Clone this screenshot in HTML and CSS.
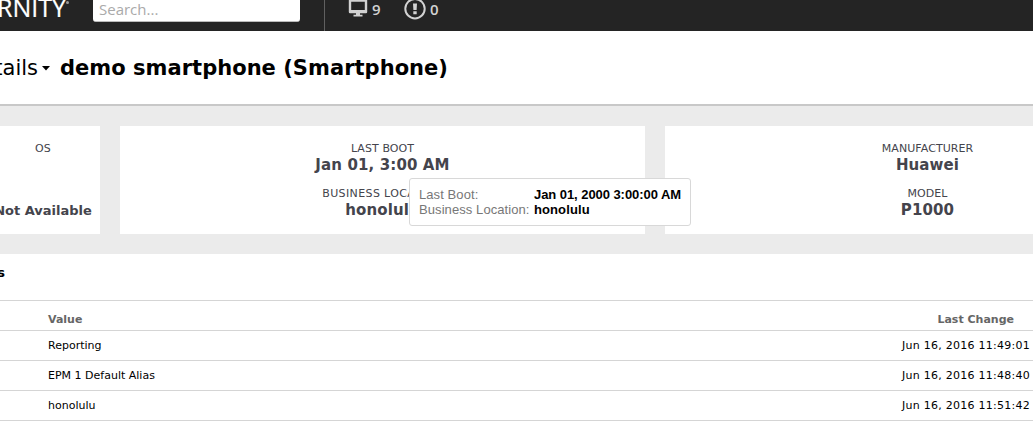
FILE: index.html
```html
<!DOCTYPE html>
<html lang="en">
<head>
<meta charset="utf-8">
<title>Device details</title>
<link rel="stylesheet" href="styles.css">
</head>
<body>
<header class="topbar">
  <div class="logo"><span class="logo-text">RNITY</span><span class="logo-mark"></span></div>
  <div class="search">Search...</div>
  <div class="status">
    <svg class="monitor" width="20" height="20" viewBox="0 0 20 20"><path d="M2 0.500H18V12H2Z" fill="none" stroke="#d2d2d2" stroke-width="2.400" stroke-linejoin="round"/><path d="M3 10H17V12H3ZM8 13H12V14.800H14.500V16.600H5.500V14.800H8Z" fill="#d2d2d2"/></svg>
    <span class="count monitor-count">9</span>
    <svg class="alert" width="22" height="20" viewBox="0 0 22 20"><circle cx="11" cy="8.700" r="9.700" fill="none" stroke="#d2d2d2" stroke-width="2"/><path d="M9 3.500H13L12.600 10H9.400ZM9.300 11.200H12.700V14.200H9.300Z" fill="#d2d2d2"/></svg>
    <span class="count">0</span>
  </div>
</header>
<section class="heading">
  <span class="crumb">tails</span>
  <svg class="caret" width="8" height="5" viewBox="0 0 8 5"><path d="M0 0H8L4 4.500Z"/></svg>
  <h1 class="title">demo smartphone (Smartphone)</h1>
</section>
<main class="content">
  <div class="cards">
    <section class="card card-os">
      <div class="label">OS</div>
      <div class="value small">Not Available</div>
    </section>
    <section class="card card-boot">
      <div class="label">LAST BOOT</div>
      <div class="value">Jan 01, 3:00 AM</div>
      <div class="label second wide">BUSINESS LOCATION</div>
      <div class="value">honolulu</div>
      <div class="tooltip">
        <span class="tip-label">Last Boot:</span><b class="tip-date">Jan 01, 2000 3:00:00 AM</b>
        <span class="tip-label">Business Location:</span><b>honolulu</b>
      </div>
    </section>
    <section class="card card-maker">
      <div class="label">MANUFACTURER</div>
      <div class="value">Huawei</div>
      <div class="label second">MODEL</div>
      <div class="value">P1000</div>
    </section>
  </div>
  <section class="panel">
    <h2 class="panel-title">s</h2>
    <div class="row head"><span>Value</span><span>Last Change</span></div>
    <div class="row"><span>Reporting</span><span class="date">Jun 16, 2016 11:49:01</span></div>
    <div class="row"><span>EPM 1 Default Alias</span><span class="date">Jun 16, 2016 11:48:40</span></div>
    <div class="row"><span>honolulu</span><span class="date">Jun 16, 2016 11:51:42</span></div>
  </section>
</main>
</body>
</html>
```
FILE: styles.css
```css
* { box-sizing: border-box; }
html { overflow: hidden; }
body {
  margin: 0;
  width: 1033px;
  height: 429px;
  overflow: hidden;
  background: #fff;
  color: #000;
  font-family: Verdana, "DejaVu Sans", sans-serif;
}
.topbar {
  display: flex;
  height: 31px;
  background: #242424;
  overflow: hidden;
}
.logo {
  display: flex;
  justify-content: flex-end;
  width: 69px;
  margin-right: 24px;
  color: #fff;
  font: 25px/32px "Open Sans", sans-serif;
  -webkit-text-stroke: 0.2px #fff;
}
.logo-text { margin-top: -9px; }
.logo-mark {
  flex: none;
  width: 3px;
  height: 3px;
  margin-top: 1px;
  border-radius: 50%;
  background: #999;
}
.search {
  width: 207px;
  height: 22px;
  padding-left: 6px;
  border-bottom: 1px solid #bbb;
  border-radius: 0 0 3px 3px;
  background: #fff;
  color: #aaa;
  font: 15px/18px "Open Sans", sans-serif;
}
.status {
  display: flex;
  margin-left: 24px;
  padding-left: 23px;
  border-left: 1px solid #606060;
  color: #d2d2d2;
  font: 600 15px/18px "Open Sans", sans-serif;
}
.monitor-count { width: 9px; margin-right: 23px; }
.monitor { margin-right: 4px; }
.alert { margin-right: 4px; }
.heading {
  display: flex;
  height: 75px;
  border-bottom: 2px solid #c8c8c8;
}
.crumb {
  display: flex;
  justify-content: flex-end;
  width: 38px;
  margin-right: 4px;
  font-size: 21px;
  line-height: 74px;
}
.caret { margin: 35px 10px 0 0; }
.title {
  margin: 0;
  font-size: 21px;
  line-height: 74px;
  letter-spacing: 0.03px;
  white-space: nowrap;
}
.content {
  height: 323px;
  padding-top: 20px;
  background: #ebebeb;
}
.cards {
  display: grid;
  grid-template-columns: 100px 525px 525px;
  gap: 20px;
  height: 108px;
}
.card {
  position: relative;
  padding-top: 15px;
  background: #fff;
  color: #44444c;
  text-align: center;
  white-space: nowrap;
}
.label { font-size: 11px; line-height: 15px; letter-spacing: 0.08px; }
.wide { letter-spacing: 0.38px; }
.second { margin-top: 12px; }
.value { font-size: 15px; font-weight: bold; line-height: 18px; letter-spacing: 0.12px; }
.small { margin-top: 46px; font-size: 13px; letter-spacing: 0; }
.card-os { width: 114px; margin-left: -14px; }
.tooltip {
  position: absolute;
  top: 52px;
  left: 289px;
  z-index: 1;
  display: grid;
  grid-template-columns: 115px auto;
  grid-auto-rows: 15px;
  align-content: start;
  width: 282px;
  height: 48px;
  padding: 8px 0 0 9px;
  border: 1px solid #d8d8d8;
  border-radius: 3px;
  background: #fff;
  color: #777;
  font: 13px/15px "Liberation Sans", sans-serif;
  text-align: left;
}
.tooltip b { color: #000; letter-spacing: 0.1px; }
.tooltip .tip-date { letter-spacing: -0.06px; }
.tip-label { letter-spacing: 0.08px; }
.panel { height: 175px; margin-top: 20px; background: #fff; }
.panel-title {
  display: flex;
  justify-content: flex-end;
  width: 5px;
  height: 46px;
  margin: 0;
  font-size: 13px;
  line-height: 38px;
}
.row {
  display: flex;
  justify-content: space-between;
  height: 30px;
  padding: 0 3px 0 48px;
  border-top: 1px solid #d5d5d5;
  font-size: 11px;
  line-height: 29px;
}
.row:last-child { height: 31px; border-bottom: 1px solid #d5d5d5; }
.date { letter-spacing: 0.26px; }
.head {
  padding-right: 19px;
  color: #666;
  font-weight: bold;
  line-height: 38px;
}
```
